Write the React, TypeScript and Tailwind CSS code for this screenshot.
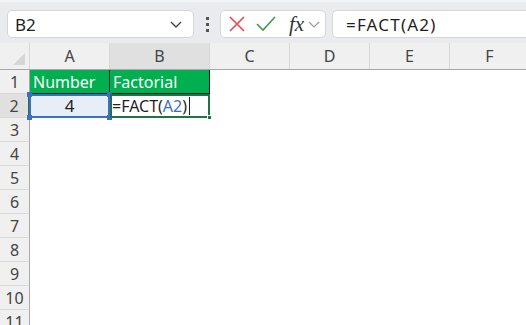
import React from "react";

const cols = [
  { name: "A", w: 80 },
  { name: "B", w: 100 },
  { name: "C", w: 80 },
  { name: "D", w: 80 },
  { name: "E", w: 80 },
  { name: "F", w: 80 },
];

export default function App() {
  const rows = Array.from({ length: 11 }, (_, i) => i + 1);
  return (
    <div
      className="w-[526px] h-[325px] overflow-hidden bg-white relative"
      style={{ fontFamily: "'Noto Sans', 'Liberation Sans', sans-serif" }}
    >
      {/* Toolbar */}
      <div className="h-[43px] bg-[#e9ebef] flex items-start pt-[8px] pl-[7px] border-t-2 border-[#f3f4f6] overflow-hidden">
        <div className="w-[187px] shrink-0 h-[28px] bg-white rounded-[5px] border border-[#d6d6d6] flex items-center pl-[7px] pr-[10px] justify-between">
          <span className="text-[17px] text-[#1f1f1f] leading-none">B2</span>
          <svg width="14" height="10" viewBox="0 0 14 10">
            <path d="M2 3 L7 8 L12 3" fill="none" stroke="#444" strokeWidth="1.4" />
          </svg>
        </div>
        <div className="w-[26px] shrink-0 h-[28px] flex flex-col items-center justify-center gap-[3px]">
          <div className="w-[3px] h-[3px] bg-[#555]" />
          <div className="w-[3px] h-[3px] bg-[#555]" />
          <div className="w-[3px] h-[3px] bg-[#555]" />
        </div>
        <div className="w-[106px] shrink-0 h-[28px] bg-white rounded-[5px] border border-[#d6d6d6] flex items-center pl-[7px]">
          <svg width="18" height="18" viewBox="0 0 18 18">
            <path d="M2 2 L16 16 M16 2 L2 16" stroke="#e5484d" strokeWidth="1.6" fill="none" />
          </svg>
          <svg width="22" height="18" viewBox="0 0 22 18" className="ml-[9px]">
            <path d="M2 9 L8 15 L20 2" stroke="#3d9a50" strokeWidth="1.6" fill="none" />
          </svg>
          <span
            className="ml-[12px] text-[21px] italic text-[#333] leading-none"
            style={{ fontFamily: "'Liberation Serif', serif" }}
          >
            fx
          </span>
          <svg width="12" height="8" viewBox="0 0 12 8" className="ml-[4px]">
            <path d="M1 2 L6 7 L11 2" fill="none" stroke="#999" strokeWidth="1.2" />
          </svg>
        </div>
        <div className="ml-[6px] w-[210px] shrink-0 h-[28px] bg-white rounded-l-[5px] border border-r-0 border-[#d6d6d6] flex items-center pl-[13px]">
          <span
            className="text-[17px] text-[#1f1f1f] leading-none tracking-[1.2px]"
            style={{ fontFamily: "'Noto Sans', sans-serif" }}
          >
            =FACT(A2)
          </span>
        </div>
      </div>

      {/* Column headers */}
      <div className="flex h-[27px] bg-[#f0f0f0] border-b border-[#a8a8a8]">
        <div className="w-[30px] shrink-0 h-full relative border-r border-[#d8d8d8]">
          <svg width="14" height="14" viewBox="0 0 14 14" className="absolute right-[3px] bottom-[3px]">
            <path d="M13 1 L13 13 L1 13 Z" fill="#d6d6d6" />
          </svg>
        </div>
        {cols.map((c) => (
          <div
            key={c.name}
            className={
              "h-full shrink-0 flex items-center justify-center text-[16px] text-[#444] border-r border-[#d8d8d8] " +
              (c.name === "B" ? "bg-[#e0e0e0]" : "")
            }
            style={{ width: c.w }}
          >
            {c.name}
          </div>
        ))}
      </div>

      {/* Rows */}
      <div className="flex flex-col">
        {rows.map((r) => (
          <div key={r} className="flex h-[24px] shrink-0">
            <div
              className={
                "w-[30px] shrink-0 h-full flex items-center justify-center text-[16px] text-[#444] border-b border-[#d8d8d8] " +
                (r === 2
                  ? "bg-[#e0e0e0] border-r-2 border-r-[#217346]"
                  : "bg-[#f0f0f0] border-r border-r-[#a8a8a8]")
              }
            >
              {r}
            </div>
            {cols.map((c) => {
              let cls = "h-full shrink-0 relative ";
              let content: React.ReactNode = null;
              if (r === 1 && (c.name === "A" || c.name === "B")) {
                cls += "bg-[#00b050] border-r border-b border-[#1a1a1a] text-white text-[16px] flex items-center pl-[3px]";
                content = c.name === "A" ? "Number" : "Factorial";
              } else if (r === 2 && c.name === "A") {
                cls += "bg-[#e8eef8] border-2 border-[#3a6fc4] -ml-[1px] flex items-center justify-center text-[17px] text-[#1f1f1f]";
                content = (
                  <>
                    4
                    <div className="absolute -left-[4px] -top-[4px] w-[5px] h-[5px] bg-[#3a6fc4]" />
                    <div className="absolute -right-[4px] -top-[4px] w-[5px] h-[5px] bg-[#3a6fc4]" />
                    <div className="absolute -left-[4px] -bottom-[4px] w-[5px] h-[5px] bg-[#3a6fc4]" />
                    <div className="absolute -right-[4px] -bottom-[4px] w-[5px] h-[5px] bg-[#3a6fc4]" />
                  </>
                );
              } else if (r === 2 && c.name === "B") {
                cls += "bg-white border-2 border-[#217346] flex items-center pl-[0px] text-[16px] text-[#1f1f1f] z-10";
                content = (
                  <>
                    <span className="leading-none">=FACT(</span>
                    <span className="leading-none text-[#3a6fc4]">A2</span>
                    <span className="leading-none">)</span>
                    <span className="w-[1px] h-[18px] bg-[#222] ml-[2px]" />
                    <div className="absolute -right-[4px] -bottom-[4px] w-[5px] h-[5px] bg-[#217346] border border-white" />
                  </>
                );
              }
              return (
                <div key={c.name} className={cls} style={{ width: r === 2 && c.name === "A" ? c.w + 1 : c.w }}>
                  {content}
                </div>
              );
            })}
          </div>
        ))}
      </div>
    </div>
  );
}
